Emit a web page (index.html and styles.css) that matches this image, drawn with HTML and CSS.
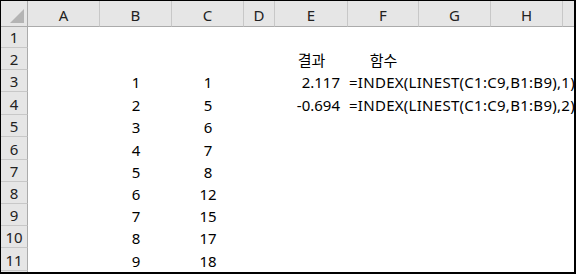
FILE: index.html
```html
<!DOCTYPE html>
<html lang="ko">
<head>
  <meta charset="UTF-8">
  <meta name="viewport" content="width=device-width, initial-scale=1.0">
  <title>LINEST</title>
  <link rel="stylesheet" href="styles.css">
</head>
<body>
  <div class="sheet">
    <div class="row head">
      <div class="corner"><span></span></div>
      <div class="col">A</div><div class="col">B</div><div class="col">C</div><div class="col">D</div>
      <div class="col">E</div><div class="col">F</div><div class="col">G</div><div class="col">H</div><div class="col last"></div>
    </div>
    <div class="row r1">
      <div class="rh">1</div><div></div><div></div><div></div><div></div><div></div><div></div><div></div><div></div><div></div>
    </div>
    <div class="row r2">
      <div class="rh">2</div><div></div><div></div><div></div><div></div>
      <div class="c">결과</div><div class="c">함수</div><div></div><div></div><div></div>
    </div>
    <div class="row r3">
      <div class="rh">3</div><div></div><div class="c">1</div><div class="c">1</div><div></div>
      <div class="num">2.117</div><div class="f">=INDEX(LINEST(C1:C9,B1:B9),1)</div><div></div><div></div><div></div>
    </div>
    <div class="row r4">
      <div class="rh">4</div><div></div><div class="c">2</div><div class="c">5</div><div></div>
      <div class="num">-0.694</div><div class="f">=INDEX(LINEST(C1:C9,B1:B9),2)</div><div></div><div></div><div></div>
    </div>
    <div class="row r5">
      <div class="rh">5</div><div></div><div class="c">3</div><div class="c">6</div><div></div><div></div><div></div><div></div><div></div><div></div>
    </div>
    <div class="row r6">
      <div class="rh">6</div><div></div><div class="c">4</div><div class="c">7</div><div></div><div></div><div></div><div></div><div></div><div></div>
    </div>
    <div class="row r7">
      <div class="rh">7</div><div></div><div class="c">5</div><div class="c">8</div><div></div><div></div><div></div><div></div><div></div><div></div>
    </div>
    <div class="row r8">
      <div class="rh">8</div><div></div><div class="c">6</div><div class="c">12</div><div></div><div></div><div></div><div></div><div></div><div></div>
    </div>
    <div class="row r9">
      <div class="rh">9</div><div></div><div class="c">7</div><div class="c">15</div><div></div><div></div><div></div><div></div><div></div><div></div>
    </div>
    <div class="row r10">
      <div class="rh">10</div><div></div><div class="c">8</div><div class="c">17</div><div></div><div></div><div></div><div></div><div></div><div></div>
    </div>
    <div class="row r11">
      <div class="rh">11</div><div></div><div class="c">9</div><div class="c">18</div><div></div><div></div><div></div><div></div><div></div><div></div>
    </div>
    <div class="row r12">
      <div class="rh"></div><div></div><div></div><div></div><div></div><div></div><div></div><div></div><div></div><div></div>
    </div>
  </div>
</body>
</html>
```

FILE: styles.css
```css
* {
  padding: 0;
  margin: 0;
  box-sizing: border-box;
}

body {
  background-color: #fff;
  font-family: "Noto Sans", "Noto Sans CJK KR", sans-serif;
  font-size: 15px;
  color: #000;
}

.sheet {
  width: 576px;
  height: 274px;
  border-top: 1px solid #000;
  border-left: 1px solid #000;
  border-right: 2px solid #000;
  border-bottom: 2px solid #000;
  overflow: hidden;
  display: flex;
  flex-direction: column;
}

.row {
  display: grid;
  grid-template-columns: 27px 72px 72px 72px 31px 73px 71px 72px 72px 11px;
  height: 22px;
  flex: none;
}

.row > div {
  display: flex;
  align-items: flex-end;
  padding-bottom: 1px;
  line-height: 18px;
  white-space: nowrap;
  min-width: 0;
}

.head { height: 26px; }
.r1 { height: 21px; }
.r4, .r6, .r11 { height: 23px; }
.r12 { height: 1px; }

.head > div {
  background-color: #e6e6e6;
  border-right: 1px solid #c8c8c8;
  border-bottom: 1px solid #ababab;
  justify-content: center;
  color: #222;
  padding-bottom: 2px;
}

.head > .corner {
  border-right-color: #ababab;
  position: relative;
}

.corner span {
  position: absolute;
  right: 3px;
  bottom: 3px;
  width: 0;
  height: 0;
  border-left: 14px solid transparent;
  border-bottom: 14px solid #b4b4b4;
}

.head > .last { border-right: none; }

.row > .rh {
  background-color: #e6e6e6;
  border-right: 1px solid #ababab;
  border-bottom: 1px solid #c8c8c8;
  justify-content: center;
  color: #222;
}

.row > .c { justify-content: center; }
.row > .num { justify-content: flex-end; padding-right: 8px; }
.row > .f { overflow: visible; padding-left: 1px; letter-spacing: 0.28px; }
```
